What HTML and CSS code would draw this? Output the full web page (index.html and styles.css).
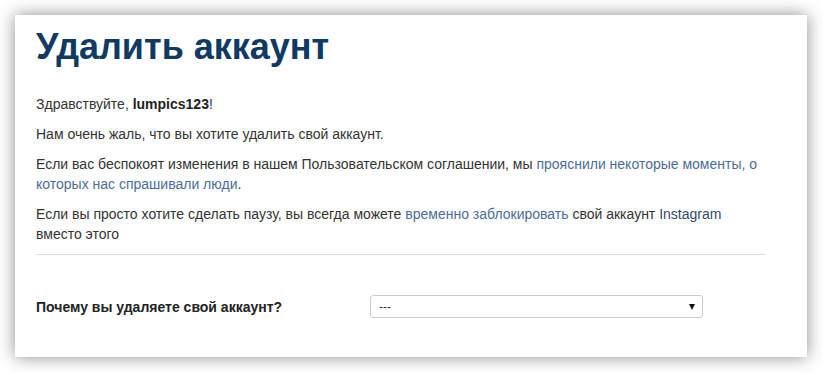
FILE: index.html
```html
<!DOCTYPE html>
<html lang="ru">
<head>
<meta charset="UTF-8" />
<meta name="viewport" content="width=device-width, initial-scale=1.0"/>
<title>Удалить аккаунт</title>
<link rel="stylesheet" href="styles.css">
</head>
<body>
<div class="card">
  <h1>Удалить аккаунт</h1>
  <p>Здравствуйте, <b>lumpics123</b>!</p>
  <p>Нам очень жаль, что вы хотите удалить свой аккаунт.</p>
  <p>Если вас беспокоят изменения в нашем Пользовательском соглашении, мы <a href="#">прояснили некоторые моменты, о которых нас спрашивали люди</a>.</p>
  <p>Если вы просто хотите сделать паузу, вы всегда можете <a href="#">временно заблокировать</a> свой аккаунт <span class="brand">Instagram</span> вместо этого</p>
  <hr>
  <div class="form-row">
    <label class="label">Почему вы удаляете свой аккаунт?</label>
    <div class="select">
      <span>---</span>
      <span class="arrow"></span>
    </div>
  </div>
</div>
</body>
</html>
```

FILE: styles.css
```css
body {
  font-family: 'Liberation Sans', Arial, sans-serif;
  font-size: 14px;
  line-height: 20px;
  color: #333;
  background: #fff;
  margin: 0;
  padding: 15px 16px 16px 15px;
}
.card {
  background: #fff;
  box-shadow: 0 0 16px rgba(0, 0, 0, 0.45);
  padding: 11px 42px 39px 21px;
  height: 342px;
  box-sizing: border-box;
}
h1 {
  font-size: 36px;
  line-height: 42px;
  font-weight: bold;
  color: #0f3a63;
  margin: 0 0 26px;
}
p {
  margin: 0 0 10px;
}
a {
  color: #4a6d96;
  text-decoration: none;
}
b {
  color: #222;
}
.brand {
  color: #2f4a66;
}
hr {
  border: none;
  border-top: 1px solid #ddd;
  margin: 0 0 40px;
}
.form-row {
  display: grid;
  grid-template-columns: 334px 333px;
  align-items: center;
}
.label {
  font-weight: bold;
  color: #222;
}
.select {
  height: 23px;
  box-sizing: border-box;
  border: 1px solid #ccc;
  border-radius: 3px;
  display: flex;
  align-items: center;
  justify-content: space-between;
  padding: 0 7px 0 8px;
  font-size: 12px;
  color: #333;
}
.arrow {
  width: 0;
  height: 0;
  border-left: 3px solid transparent;
  border-right: 3px solid transparent;
  border-top: 6px solid #111;
}
```
